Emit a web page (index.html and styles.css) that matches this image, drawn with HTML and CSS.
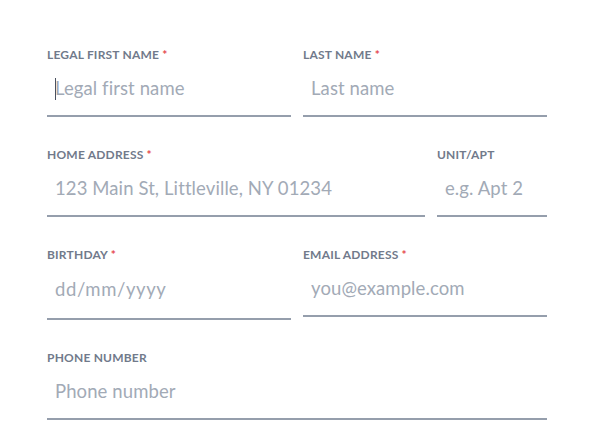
FILE: index.html
```html
<!DOCTYPE html>
<html lang="en">
<head>
<meta charset="utf-8">
<title>Personal details</title>
<link rel="stylesheet" href="styles.css">
</head>
<body>
<form class="form">
  <div class="row row-half">
    <div class="field">
      <label class="label">LEGAL FIRST NAME <span class="req">*</span></label>
      <div class="input-wrap">
        <input class="input" type="text" placeholder="Legal first name">
        <span class="caret"></span>
      </div>
    </div>
    <div class="field">
      <label class="label">LAST NAME <span class="req">*</span></label>
      <div class="input-wrap"><input class="input" type="text" placeholder="Last name"></div>
    </div>
  </div>
  <div class="row row-address">
    <div class="field">
      <label class="label">HOME ADDRESS <span class="req">*</span></label>
      <div class="input-wrap"><input class="input" type="text" placeholder="123 Main St, Littleville, NY 01234"></div>
    </div>
    <div class="field">
      <label class="label">UNIT/APT</label>
      <div class="input-wrap"><input class="input" type="text" placeholder="e.g. Apt 2"></div>
    </div>
  </div>
  <div class="row row-half">
    <div class="field">
      <label class="label">BIRTHDAY <span class="req">*</span></label>
      <div class="input-wrap"><input class="input input-date" type="text" placeholder="dd/mm/yyyy"></div>
    </div>
    <div class="field">
      <label class="label">EMAIL ADDRESS <span class="req">*</span></label>
      <div class="input-wrap"><input class="input" type="email" placeholder="you@example.com"></div>
    </div>
  </div>
  <div class="row">
    <div class="field">
      <label class="label">PHONE NUMBER</label>
      <div class="input-wrap"><input class="input" type="tel" placeholder="Phone number"></div>
    </div>
  </div>
</form>
</body>
</html>
```

FILE: styles.css
```css
html, body {
  margin: 0;
  padding: 0;
  background: #ffffff;
}

body {
  font-family: Lato, "Noto Sans", "Liberation Sans", sans-serif;
}

.form {
  width: 500px;
  padding: 47px 0 0 47px;
  display: flex;
  flex-direction: column;
  gap: 30px;
}

.row {
  display: grid;
  grid-template-columns: 1fr;
  column-gap: 12px;
  align-items: start;
}

.row-half {
  grid-template-columns: 1fr 1fr;
}

.row-address {
  grid-template-columns: 1fr 110px;
}

.field {
  display: flex;
  flex-direction: column;
}

.label {
  display: block;
  font-size: 12px;
  line-height: 16px;
  font-weight: 700;
  color: #717a8b;
  letter-spacing: 0.2px;
}

.req {
  color: #e5484d;
}

.input-wrap {
  position: relative;
  margin-top: 2px;
}

.input {
  display: block;
  box-sizing: border-box;
  width: 100%;
  height: 52px;
  margin: 0;
  padding: 0 8px 5px;
  border: 0;
  border-bottom: 2px solid #959eac;
  background: transparent;
  font-family: Lato, "Noto Sans", "Liberation Sans", sans-serif;
  font-size: 18.5px;
  letter-spacing: 0.1px;
  color: #2d3440;
  outline: none;
}

.input::placeholder {
  color: #a2aab6;
  opacity: 1;
}

.input-date {
  height: 55px;
  letter-spacing: 0.6px;
  padding-bottom: 5px;
}

.caret {
  position: absolute;
  left: 8px;
  top: 13px;
  width: 1px;
  height: 22px;
  background: #4a5160;
}
```
